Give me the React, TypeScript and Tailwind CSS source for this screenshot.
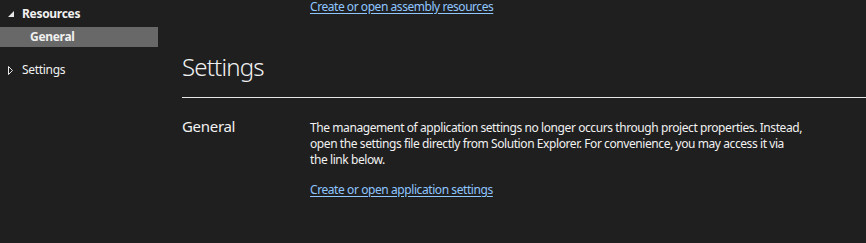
import React from 'react';

export default function App() {
  return (
    <div className="flex h-[243px] w-[866px] overflow-hidden bg-[#1f1f1f] text-[#f1f1f1] font-['Noto_Sans',sans-serif]">
      {/* Sidebar */}
      <nav className="w-[158px] shrink-0 pt-[4px] text-[12px] tracking-[-0.3px]">
        <div className="flex h-[20px] items-center">
          <svg className="ml-[8px] mr-[8px] h-[6px] w-[6px]" viewBox="0 0 6 6">
            <path d="M6 0 L6 6 L0 6 Z" fill="#e8e8e8" />
          </svg>
          <span className="font-bold">Resources</span>
        </div>
        <div className="mt-[3px] flex h-[20px] items-center bg-[#686868] pl-[30px] font-bold">General</div>
        <div className="mt-[13px] flex h-[20px] items-center">
          <svg className="ml-[8px] mr-[9px] h-[9px] w-[5px]" viewBox="0 0 5 9">
            <path d="M0.5 0.5 L4.5 4.5 L0.5 8.5 Z" fill="none" stroke="#e8e8e8" strokeWidth={1} />
          </svg>
          <span>Settings</span>
        </div>
      </nav>

      {/* Main */}
      <main className="flex-1 pl-[24px]">
        <div className="-mt-[1px] pl-[128px] text-[12px] leading-[16px] tracking-[-0.45px]">
          <a className="text-[#8fc6ff] underline underline-offset-2">Create or open assembly resources</a>
        </div>

        <h1 className="mt-[36px] text-[24px] font-light leading-[32px] tracking-[-0.8px]">Settings</h1>
        <div className="mt-[14px] h-px bg-[#e6e6e6]" />

        <section className="mt-[18px] flex">
          <h2 className="w-[128px] shrink-0 text-[15px] leading-[20px] tracking-[-0.3px]">General</h2>
          <div className="mt-[4px] w-[520px] text-[12px] leading-[16px] tracking-[-0.42px]">
            <p>
              The management of application settings no longer occurs through project properties. Instead,
              <br />
              open the settings file directly from Solution Explorer. For convenience, you may access it via
              <br />
              the link below.
            </p>
            <a className="mt-[14px] block text-[#8fc6ff] underline underline-offset-2">Create or open application settings</a>
          </div>
        </section>
      </main>
    </div>
  );
}
